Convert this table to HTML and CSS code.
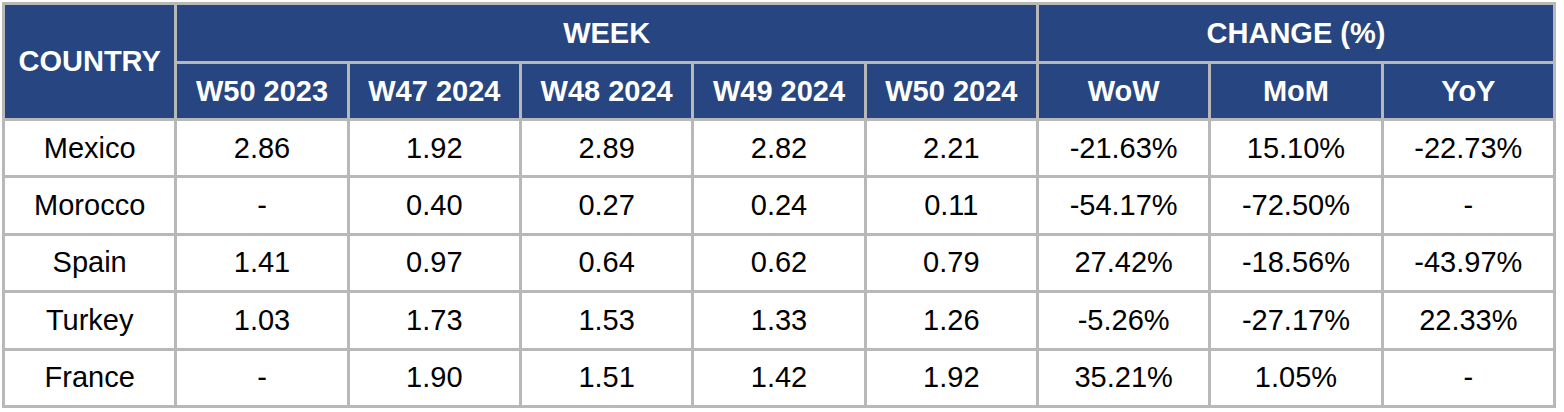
FILE: index.html
```html
<!DOCTYPE html>
<html>
<head>
<meta charset="utf-8">
<link rel="stylesheet" href="styles.css">
</head>
<body>
<table class="report">
  <colgroup>
    <col span="9" class="col">
  </colgroup>
  <thead>
    <tr class="head-top">
      <th rowspan="2" class="country-head">COUNTRY</th>
      <th colspan="5">WEEK</th>
      <th colspan="3">CHANGE (%)</th>
    </tr>
    <tr class="head-sub">
      <th>W50 2023</th>
      <th>W47 2024</th>
      <th>W48 2024</th>
      <th>W49 2024</th>
      <th>W50 2024</th>
      <th>WoW</th>
      <th>MoM</th>
      <th>YoY</th>
    </tr>
  </thead>
  <tbody>
    <tr><td>Mexico</td><td>2.86</td><td>1.92</td><td>2.89</td><td>2.82</td><td>2.21</td><td>-21.63%</td><td>15.10%</td><td>-22.73%</td></tr>
    <tr><td>Morocco</td><td>-</td><td>0.40</td><td>0.27</td><td>0.24</td><td>0.11</td><td>-54.17%</td><td>-72.50%</td><td>-</td></tr>
    <tr><td>Spain</td><td>1.41</td><td>0.97</td><td>0.64</td><td>0.62</td><td>0.79</td><td>27.42%</td><td>-18.56%</td><td>-43.97%</td></tr>
    <tr><td>Turkey</td><td>1.03</td><td>1.73</td><td>1.53</td><td>1.33</td><td>1.26</td><td>-5.26%</td><td>-27.17%</td><td>22.33%</td></tr>
    <tr><td>France</td><td>-</td><td>1.90</td><td>1.51</td><td>1.42</td><td>1.92</td><td>35.21%</td><td>1.05%</td><td>-</td></tr>
  </tbody>
</table>
</body>
</html>
```
FILE: styles.css
```css
html, body {
  margin: 0;
  padding: 0;
  background: #ffffff;
}

body {
  padding: 2px 0 0 2px;
}

.report {
  border-collapse: collapse;
  table-layout: fixed;
  width: 1554px;
  font-family: "Liberation Sans", Arial, sans-serif;
  font-size: 29px;
  color: #000000;
}

.report th,
.report td {
  border: 3px solid #b8b8b8;
  text-align: center;
  vertical-align: middle;
  padding: 0;
  white-space: nowrap;
}

.report th {
  background: #274580;
  color: #ffffff;
  font-weight: bold;
}

.head-top th {
  height: 56px;
}

.head-sub th {
  height: 54px;
}

.report td {
  height: 54.4px;
}
```
